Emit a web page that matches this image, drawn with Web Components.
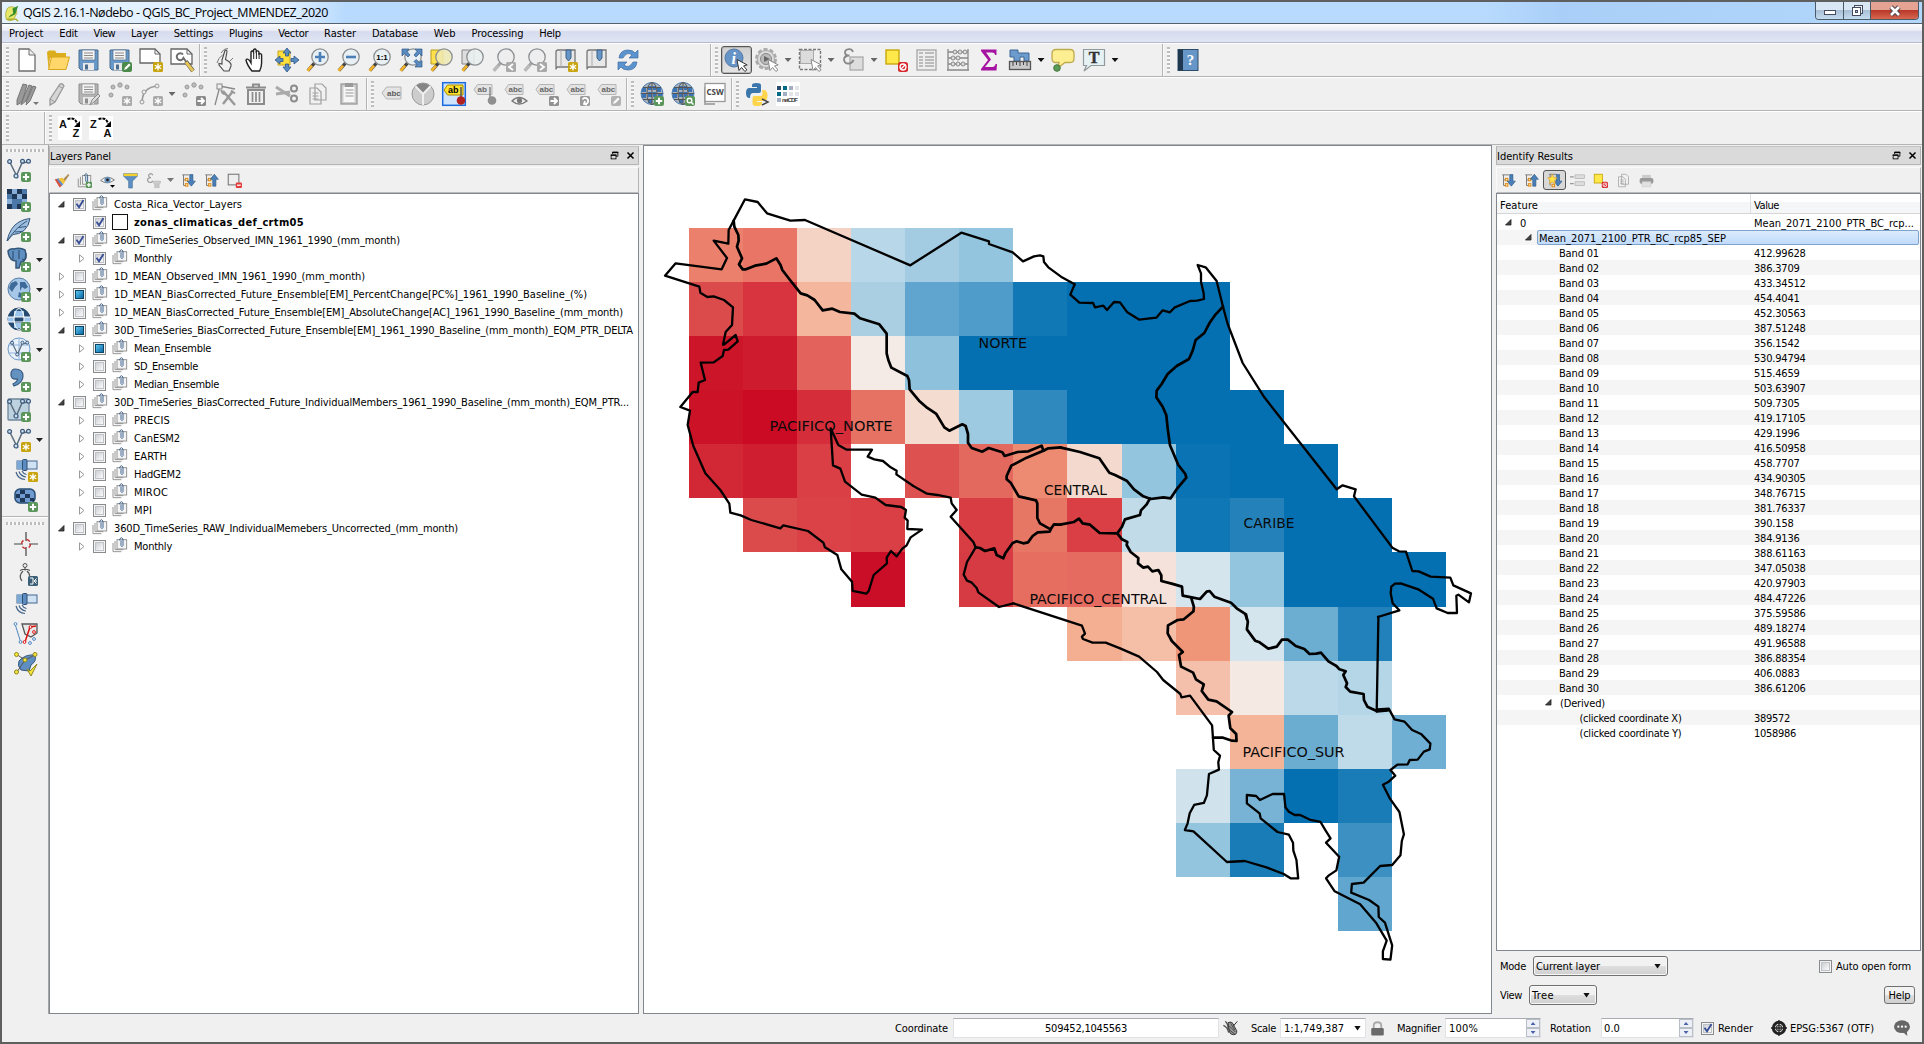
<!DOCTYPE html>
<html lang="en">
<head>
<meta charset="utf-8">
<title>QGIS 2.16.1-Nødebo - QGIS_BC_Project_MMENDEZ_2020</title>
<style>
html,body{margin:0;height:100%;overflow:hidden}
body{font:11px/14px "DejaVu Sans Condensed","DejaVu Sans",sans-serif;color:#000;background:#5f5f5f}
</style>
</head>
<body>
<qgis-window></qgis-window>
<script>
const define=(name,css,html,init)=>customElements.define(name,class extends HTMLElement{
  connectedCallback(){
    if(this.shadowRoot)return;
    const root=this.attachShadow({mode:'open'});
    const a=(k,d='')=>this.hasAttribute(k)?this.getAttribute(k):d;
    root.innerHTML=`<style>*{box-sizing:border-box}:host{box-sizing:border-box}${css}</style>`+(typeof html==='function'?html(a,this):html);
    if(init)init(root,a,this);
  }
});

/* ---------- icon drawings on a 24 x 24 grid ---------- */
const plus='<rect x="14" y="14" width="10" height="10" rx="2" fill="#5a965a"/><path d="M19 15.8v6.4M15.8 19h6.4" stroke="#fff" stroke-width="2"/>';
const star='<rect x="14" y="14" width="10" height="10" rx="1.5" fill="#c8a40e"/><path d="M19 15.5v7M15.8 17.2l6.4 3.6M22.2 17.2l-6.4 3.6" stroke="#fff" stroke-width="1.3"/><circle cx="19" cy="19" r="1.6" fill="#fff"/>';
const gstar=star.replace('#c8a40e','#a9a9a9');
const pen=c=>`<rect x="14" y="14" width="10" height="10" rx="2" fill="${c}"/><path d="M16 22l1-2.5 4-4 1.6 1.5-4 4z" fill="#fff"/>`;
const arr=(d,c='#8a8a8a')=>`<rect x="14" y="14" width="10" height="10" rx="1.5" fill="${c}"/><path d="${d}" stroke="#fff" stroke-width="1.8" fill="none"/>`;
const right='M15.5 19h6M19 16l3 3-3 3';
const floppy=(a,b)=>`<path d="M2 2h19v20H4l-2-2z" fill="${a}" stroke="${b}"/><rect x="5" y="2" width="13" height="10" fill="#f4f4f4" stroke="${b}" stroke-width=".7"/><path d="M7 5h9M7 7.5h9M7 10h9" stroke="#8b8b8b"/><rect x="6" y="15" width="11" height="7" fill="#e8e8e8"/><rect x="8" y="16.5" width="3" height="5" fill="${b}"/>`;
const glass=(fill='#e9f0f4',h='#f1b32c',inner='')=>`<path d="M8.5 15L2 22.5" stroke="#444" stroke-width="3.4"/><path d="M6 17.7L1.6 22.8" stroke="${h}" stroke-width="2.8"/><circle cx="14" cy="9" r="8.2" fill="${fill}" stroke="#8b8f91" stroke-width="1.3"/>${inner}`;
const cursor='<path d="M13 11.5l2 11 2.6-3 3.3 4 2-1.6-3.3-4 3.6-1z" fill="#fff" stroke="#333" stroke-width="1"/>';
const gcursor=cursor.replace('#333','#888');
const vee='<path d="M3 4.5l6.5 13L15 5l6-1" fill="none" stroke="#5c6d7e" stroke-width="1.5"/><g fill="#cfdfee" stroke="#39597b" stroke-width="1.2"><circle cx="2.6" cy="3.5" r="1.9"/><circle cx="15.5" cy="3.3" r="1.9"/><circle cx="21.5" cy="3.3" r="1.9"/><circle cx="9" cy="18" r="2"/></g>';
const netglobe=badge=>`<circle cx="12" cy="11.5" r="11" fill="#a9b3bd" stroke="#4b7db4"/><g fill="#3b73b4"><path d="M8 4h4v4H8zM8 10h4v5H8zM2 6h4v4H2zM17 6h4v4h-4zM13 4h3v4h-3zM13 10h3v5h-3zM2 12h4v4H2zM18 12h4v3h-4zM8 17h4v4H8z"/></g><g stroke="#555" fill="none"><ellipse cx="12" cy="11.5" rx="5" ry="11"/><path d="M1 11.5h22M12 .5v22M3 5.500h18M3 17.500h18"/></g>${badge}`;
const tag=(f,b,t='abc',c='#5d5d5d')=>`<path d="M2 11l4.500-6H21v12H6.500z" fill="${f}" stroke="${b}"/><text x="7" y="14" font-size="8" font-weight="bold" font-family="Liberation Sans" fill="${c}">${t}</text>`;
const stag=(t='abc')=>`<path d="M1 7.500L4.500 2.500H19v10H4.500z" fill="#e3e3e3" stroke="#b4b4b4"/><text x="4.500" y="10.300" font-size="8" font-weight="bold" font-family="Liberation Sans" fill="#666">${t}</text>`;
const dots='<g fill="#bdbdbd" stroke="#999"><circle cx="3" cy="13" r="2"/><circle cx="5" cy="5" r="2"/><circle cx="12" cy="3" r="2.200"/><circle cx="19" cy="5" r="2"/></g>';
const sat='<rect x="3" y="3" width="20" height="8" fill="#cfe1f3" stroke="#45698f"/><rect x="3" y="3" width="6" height="8" fill="#7ca8d6"/><rect x="8.500" y="1.500" width="4.500" height="11" rx="1" fill="#5c8cc0" stroke="#2f4f73"/><path d="M2 14q2 7 9 7.500M5 13.500q1.500 4.500 7 5.500M8 13q1.500 3 4.500 3.500" fill="none" stroke="#43648a" stroke-width="1.200"/>';
const tree='<path d="M2 3h11M4 3v17h7M4 11h6" stroke="#777" fill="none" stroke-width="1.500"/><g fill="#ffe9a8" stroke="#e08a1a" stroke-width="1.600"><rect x="7" y="8.500" width="4" height="4"/><rect x="7" y="17" width="4" height="4"/></g>';
const down='<path d="M14 2.500h5V13h4l-6.500 8L10 13h4z" fill="#4a81bb" stroke="#29527d"/>';
const up='<path d="M14 21h5V10h4L16.500 2 10 10h4z" fill="#4a81bb" stroke="#29527d"/>';
const ban='<rect x="14" y="14" width="10" height="10" rx="2.500" fill="#d8272c"/><circle cx="19" cy="19" r="3" fill="none" stroke="#fff" stroke-width="1.300"/><path d="M17 21l4-4" stroke="#fff" stroke-width="1.300"/>';
const book=`<path d="M2 21V4q0-2 2-2h17v17H4q-2 0-2 2.500" fill="#e8e8e8" stroke="#777" stroke-width="1.300"/><path d="M7 2v17" stroke="#aaa"/><path d="M12 2h5v8l-2.500 3L12 10z" fill="#6695c6" stroke="#3b6188"/>`;
const letters=(p,q)=>`<path d="M0 0h24v24H0z" fill="#fff"/><g font-size="11" font-family="Liberation Sans" fill="#111"><text x="1" y="12">${p}</text><text x="14.500" y="21">${q}</text></g><path d="M9.500 3q8-2.500 9.500 5" fill="none" stroke="#000" stroke-width="2" stroke-dasharray="3 1"/><path d="M22 5v6h-6z"/>`;
const ICON={
 app:'<path d="M4 6Q7 1 14 3q5 3 4 9l-5 9q-6 3-10-1Q1 12 4 6z" fill="#e8e76a" stroke="#a2a62d"/><path d="M6 18q3-5 7-6l-1-7 8-4-4 12z" fill="#368c2d"/><path d="M4 20h13l3 3" stroke="#b2b02d" fill="none" stroke-width="2"/>',
 newdoc:'<path d="M4 1h10l6 6v16H4z" fill="#fff" stroke="#6d6d6d" stroke-width="1.300"/><path d="M14 1v6h6" fill="#eee" stroke="#6d6d6d"/>',
 open:'<path d="M1 4l2-1.500h6L10.500 5H20v5H4L2.500 21z" fill="#dcae1e"/><path d="M5.500 9H23.500L20 21.500H2.500z" fill="#ffd76a" stroke="#d9a51a"/>',
 save:floppy('#6898c8','#4a6c8f'), saveas:floppy('#6898c8','#4a6c8f')+pen('#4c8a4c'),
 comp:'<path d="M1 1h15l5 5v9H1z" fill="#fff" stroke="#666" stroke-width="1.300"/><path d="M16 1v5h5" fill="none" stroke="#666"/>'+star,
 compmgr:'<path d="M1 1h16l5 5v10H1z" fill="#fff" stroke="#666" stroke-width="1.300"/><path d="M17 1v5h5" fill="none" stroke="#666"/><path d="M13 6.500a3.500 3.500 0 10.5 3.500l9 12.500" stroke="#6d6d6d" stroke-width="2" fill="none"/><path d="M16 13.500l7 9.500" stroke="#444" stroke-width="4"/><path d="M16 14l7 9" stroke="#e4c55a" stroke-width="3"/>',
 touch:'<path d="M9 12L12 2.500q2-1 2 1l-1.500 8 4 2.500q2 2 1.500 4L16 23h-5l-5-6v-1.500l3 .5z" fill="#f1f1f1" stroke="#4a4a4a" stroke-width="1.100"/><path d="M8 5q3-5 7-4.500M9.500 7Q5 10 4 15M17 13l3-3" stroke="#777" fill="none"/>',
 hand:'<path d="M8 23Q3 17 2 12q1-2 3.500.500L7 15V4q1-2 2.500 0V2q1.500-2 2.700 0v1.500q1.600-1.500 2.800.5v2q1.600-1 2.600.8V15q0 4-2 8z" fill="#fff" stroke="#222" stroke-width="1.400"/><path d="M9.700 5v6M12.400 4v7M15.100 5v6" stroke="#222"/>',
 pan:'<path d="M3 3h12v14H3z" fill="#ffdf3c" stroke="#c5a318"/><g fill="#5a8cc2" stroke="#2e5685" stroke-width=".8"><path d="M12 0l4 5h-2.500v3h-3V5H8zM12 24l4-5h-2.500v-3h-3v3H8zM0 12l5-4v2.500h3v3H5V16zM24 12l-5-4v2.500h-3v3h3V16z"/></g>',
 zin:glass(undefined,undefined,'<path d="M14 4v10M9 9h10" stroke="#4a7fb8" stroke-width="2.600"/>'),
 zout:glass(undefined,undefined,'<path d="M9 9h10" stroke="#4a7fb8" stroke-width="2.600"/>'),
 z11:glass(undefined,undefined,'<text x="14" y="12" font-size="8" font-weight="bold" text-anchor="middle" font-family="Liberation Sans">1:1</text>'),
 zfull:glass()+'<g fill="#5a8cc2" stroke="#2e5685" stroke-width=".7"><path d="M3 1h7L8 3.500 11 7 9 9 5.500 5.500 3 8zM23 1h-7l2 2.500L15 7l2 2 3.500-3.500L23 8zM23 19h-7l2-2.500-3-3 2-2 3.500 3 2.500-2z"/></g>',
 zsel:'<path d="M1 2h12v14H1z" fill="#ffe14d" stroke="#b79c1f"/>'+glass('#efe9b4dd'), zlay:'<path d="M1 2h12v14H1z" fill="#ddd" stroke="#888"/>'+glass('#e9efefdd'),
 zlast:glass('#eee','#bbb').replace('#444','#aaa')+arr('M21 16l-4 3 4 3','#a9a9a9'), znext:glass('#eee','#bbb').replace('#444','#aaa')+arr('M17 16l4 3-4 3','#a9a9a9'),
 bmnew:book+star,bm:book,
 refresh:'<path d="M3 10Q4 2 12 2q5 0 7 3l3-3v8h-9l3-3q-5-4-9 3z" fill="#5b93cf" stroke="#3c6da3" stroke-width=".7"/><path d="M21 14q-1 8-9 8-5 0-7-3l-3 3v-8h9l-3 3q5 4 9-3z" fill="#5b93cf" stroke="#3c6da3" stroke-width=".7"/>',
 info:'<circle cx="10" cy="10" r="9" fill="#6694c6" stroke="#517aa6"/><text x="7.500" y="16" font-size="16" font-weight="bold" font-style="italic" font-family="Liberation Serif" fill="#fff">i</text>'+cursor,
 gear:'<g fill="#dcdcdc" stroke="#aaa"><circle cx="11" cy="11" r="9.500" stroke-dasharray="4 2" stroke-width="3"/><circle cx="11" cy="11" r="8.500"/></g><circle cx="11" cy="11" r="5.500" fill="#bbb" stroke="#888"/><path d="M9 8l6 3-6 3z" fill="#666"/>'+gcursor,
 select:'<rect x="1.500" y="1.500" width="21" height="20" fill="none" stroke="#777" stroke-width="1.400" stroke-dasharray="3 1.500"/><rect x="2.500" y="2.500" width="13" height="13" fill="#dcdcdc" stroke="#aaa"/>'+gcursor,
 expr:'<rect x="9" y="9" width="13" height="13" fill="#ddd" stroke="#aaa" stroke-width="1.300"/><path d="M12 4Q11 1 8 1.200 4 1.500 4 4.500 4 7.500 8.500 7.500 3 7.500 3 12q1 4 5 3.500 3-.3 4.500-3.500" fill="none" stroke="#888" stroke-width="1.800"/>',
 desel:'<rect x="2" y="2" width="13" height="14" fill="#ffe94a" stroke="#c3a200" stroke-width="1.300"/>'+ban,
 table:'<rect x="2" y="2" width="19" height="20" fill="#eee" stroke="#aaa" stroke-width="1.400"/><path d="M4 5h4M10 5h9M4 9h4M10 9h9M4 12h4M10 12h9M4 15h4M10 15h9M4 18h4M10 18h9" stroke="#aaa" stroke-width="1.500"/>',
 abacus:'<path d="M2 22V1M22 22V1M1 22h22M2 4h20M2 10h20M2 16h20" stroke="#888" stroke-width="1.300"/><g fill="#ddd" stroke="#888"><circle cx="9" cy="4" r="2"/><circle cx="14" cy="4" r="2"/><circle cx="19" cy="4" r="2"/><circle cx="7" cy="10" r="2"/><circle cx="12" cy="10" r="2"/><circle cx="7" cy="16" r="2"/><circle cx="12" cy="16" r="2"/><circle cx="17" cy="16" r="2"/></g>',
 sigma:'<path d="M4 1.500h15.500V7H18q0-2.500-3-2.500H9l5 7-6 7.500h7.500q2.500 0 3-3H20l-.5 6.500H4V21l7-9-7-9z" fill="#a514a0"/>',
 ruler:'<path d="M2 2h8v3h11v8h-5V9h-4v4H6V9H2z" fill="#6c9bcd" stroke="#3d6792"/><rect x="1.500" y="13.500" width="21" height="8" fill="#c9c9c9" stroke="#555" stroke-width="1.300"/><path d="M5 14v4M8.500 14v3M12 14v4M15.500 14v3M19 14v4" stroke="#444"/>',
 tip:'<path d="M5 1.500h14q4 0 4 4v5q0 4-4 4h-5L7 20l1-5.500H5q-4 0-4-4v-5q0-4 4-4z" fill="#fdef91" stroke="#c0aa4e" stroke-width="1.300"/><circle cx="6" cy="20" r="3.300" fill="#5d9a57" stroke="#447840"/>',
 text:'<path d="M1.500 1.500h21v16H9L2 23l2.500-5.500h-3z" fill="#e6f1f4" stroke="#909a9d" stroke-width="1.200"/><text x="12" y="15" font-size="16" text-anchor="middle" font-family="Liberation Serif" fill="#333" stroke="#333" stroke-width=".4">T</text>',
 help:'<rect x="2" y="1.500" width="20" height="21" fill="#6695c8" stroke="#2c4b69"/><rect x="2" y="1.500" width="5" height="21" fill="#1f3850"/><text x="14.500" y="17" font-size="15" text-anchor="middle" font-family="Liberation Serif" fill="#fff">?</text>',
 pencils:'<g fill="#999" stroke="#777"><path d="M2 18L8 2l4 1-5 17-5 3zM7 19l7-16 3 1-6 15-5 4zM12 18l6-14 3 1-6 14-4 4z"/></g><path d="M18 20h6l-3 3z" fill="#777"/>',
 pencil:'<path d="M4 17L14 2q3-1 4 2L9 20l-5 3z" fill="#d6d6d6" stroke="#999" stroke-width="1.300"/><path d="M4 17l5 3M13 4l4 2.500" stroke="#999"/>',
 gsave:floppy('#b4b4b4','#8d8d8d')+'<path d="M13 23l2-5 6-6 2 2-6 6z" fill="#ddd" stroke="#888"/>',
 pts:dots+gstar,curve:'<path d="M3 21Q3 5 19 4" stroke="#999" fill="none" stroke-width="1.600"/><g fill="#eee" stroke="#999"><circle cx="3" cy="20" r="2"/><circle cx="5" cy="10" r="2"/><circle cx="18" cy="4" r="2"/></g>'+gstar,
 move:dots+arr(right),node:'<path d="M2 23L7 4l15 3M7 5h3" fill="none" stroke="#888" stroke-width="1.300"/><rect x="4" y="2" width="5" height="5" fill="#eee" stroke="#888"/><path d="M10 22L20 9M10 9l12 14" stroke="#999" stroke-width="2.400" fill="none"/><path d="M8.500 8q0 4 4 4M18 8.500l4 3" fill="none" stroke="#999" stroke-width="2"/>',
 trash:'<path d="M4 8h16v14H4zM2 5.500h20M9 5V2.500h6V5" fill="none" stroke="#8c8c8c" stroke-width="2"/><path d="M8.500 10v10M12 10v10M15.500 10v10" stroke="#8c8c8c" stroke-width="1.700"/>',
 cut:'<path d="M1 5l14 9M1 12l14-2" stroke="#aaa" stroke-width="3"/><g fill="none" stroke="#8c8c8c" stroke-width="2"><circle cx="19" cy="6.500" r="3"/><circle cx="19" cy="16.500" r="3"/></g>',
 copy:'<g fill="#f1f1f1" stroke="#a0a0a0" stroke-width="1.200"><path d="M9 2h7l4 4v12H9zM4 6h7l4 4v12H4z"/></g><path d="M6.500 11h6M6.500 14h6M6.500 17h6" stroke="#a0a0a0"/>',
 paste:'<rect x="4" y="2" width="16" height="20" fill="#ccc" stroke="#999" stroke-width="1.300"/><rect x="6.500" y="5" width="11" height="15" fill="#f7f7f7"/><path d="M8.500 8h8M8.500 11h8M8.500 14h8" stroke="#999"/><rect x="8" y="1" width="8" height="4" fill="#999"/>',
 abc:tag('#e3e3e3','#b4b4b4'),pie:'<circle cx="12" cy="12" r="11" fill="#ccc" stroke="#999"/><path d="M12 13L4.500 4.300Q12-2 19.500 4.300z" fill="#858585"/><path d="M12 23V12L4.500 4.300M12 12l7.500-7.700" stroke="#f0f0f0" stroke-width="2" fill="none"/>',
 abhl:'<rect x=".7" y=".7" width="22.600" height="22.600" fill="#cfe3fb" stroke="#1a6be0" stroke-width="1.500"/><path d="M2 8l3.500-5H21v10H5.500z" fill="#ffe32e" stroke="#a68c00"/><text x="6" y="11" font-size="9" font-weight="bold" font-family="Liberation Sans">ab</text><path d="M19 5v11" stroke="#555" stroke-width="1.500"/><circle cx="19" cy="18.500" r="4.300" fill="#b1211f"/>',
 abpin:stag('ab')+'<path d="M17 5v11" stroke="#888" stroke-width="1.500"/><circle cx="19" cy="18.500" r="4.300" fill="#8f8f8f"/>',
 abeye:stag()+'<path d="M8 19q7-7 15 0-8 6-15 0z" fill="#eee" stroke="#777" stroke-width="1.300"/><circle cx="15.500" cy="18.500" r="2.600" fill="#777"/>',
 abmove:stag()+arr(right,'#929292'),abrot:stag()+arr('M16.500 17.500a3 3 0 112.500 4.500M19 19l-1 3 3 1','#9a9a9a'),abedit:stag()+pen('#b2b2b2'),
 gl1:netglobe(plus),gl2:netglobe('<rect x="14" y="14" width="10" height="10" rx="2" fill="#5a965a"/><circle cx="18.500" cy="18.500" r="2.300" fill="none" stroke="#fff" stroke-width="1.400"/><path d="M20 20l2.500 2.500" stroke="#fff" stroke-width="1.500"/>'),
 csw:'<path d="M3 5v17h10" fill="none" stroke="#aaa" stroke-width="2"/><rect x="3" y="1.500" width="20" height="18" fill="#fff" stroke="#999" stroke-width="1.300"/><text x="13" y="13" font-size="8" font-weight="bold" text-anchor="middle" font-family="Open Sans" fill="#444">CSW</text>',
 python:'<path d="M7 6V3q0-2 4.500-2T16 3v6q0 2-2 2H8q-3 0-3 5-4 .5-4-5t4-5h7V5H7z" fill="#3a76ab"/><path d="M17 8h2q3.500.500 3.500 5.500T19 19h-7v1h5v2q-1 2-5 2t-4.500-2v-6q0-2 2-2h6q2 0 2-3z" fill="#fed44b"/><path d="M17 17l6 3-6 3" fill="none" stroke="#444" stroke-width="1.500"/>',
 netcdf:'<path d="M0 0h24v24H0z" fill="#fff"/><path d="M1 4h4v4H1z" fill="#2c4b6b"/><path d="M7 4h4v4H7zM1 10h4v4H1z" fill="#006a87"/><path d="M13 4h4v4h-4zM7 10h4v4H7zM1 16h4v4H1z" fill="#a1aec3"/><path d="M19 4h4v4h-4zM13 10h4v4h-4zM19 10h4v4h-4z" fill="#e2e4e8"/><text x="6" y="19.500" font-size="6" font-family="Liberation Sans" textLength="16" fill="#444">netCDF</text>',
 az:letters('A','Z'),za:letters('Z','A'),
 vadd:vee+plus,vnew:vee+star,
 raster:'<path d="M0 1h20v20H0z" fill="#4b78a9"/><path d="M0 1h5v5H0zM10 1h5v5h-5zM5 6h5v5H5zM15 6h5v5h-5zM0 16h5v5H0zM10 16h5v5h-5z" fill="#1e3754"/><path d="M5 1h5v5H5zM10 6h5v5h-5zM0 11h5v5H0zM15 11h5v5h-5z" fill="#88aed6"/>'+plus,
 feather:'<path d="M0 23Q3 9 12 4q5-3 11-3.500-1 7.500-6 12-5 4-11 4l-3 3z" fill="#9ebfdf" stroke="#34567c"/><path d="M.5 23Q8 10 20 3M8 14l7-.5M12 9.500l7-1" stroke="#34567c" fill="none"/>'+plus,
 elephant:'<path d="M1 3q2-3 6-2 6-2 11 1 2 7-1 11l-3 1-2 6H9V13Q2 13 1 3z" fill="#6090c2" stroke="#335679" stroke-width="1.500"/><path d="M6 3v8M12 2v9M15 11q5 3 4-6" fill="none" stroke="#335679" stroke-width="1.300"/>'+plus,
 earth:'<circle cx="12" cy="11" r="11" fill="#a6c7e7" stroke="#5a7fa6"/><path d="M4 5l5-2 2 3-3 3-3 5-3-4zM13 4h5l3 5-3 2-3-2-2 4zM12 14l4 2-1 4-4-1z" fill="#3d6a99"/>'+plus,
 wms:'<circle cx="12" cy="11" r="11" fill="#254a70" stroke="#254a70"/><path d="M7 3h10v6H7zM1 9h6v5H1zM17 9h6v5h-6zM7 15h10v5H7z" fill="#9dc4ea"/><g stroke="#fff" fill="none"><ellipse cx="12" cy="11" rx="5" ry="10.500"/><path d="M1 9h22M1 14h22"/></g>'+plus,
 wfs:'<circle cx="12" cy="11" r="11" fill="#e8f1fa" stroke="#6f9ac8"/><path d="M2 7h20M2 15h20M12 0v22" stroke="#8eb2da"/><g transform="translate(3 2) scale(.8)">'+vee+'</g>'+plus,
 comma:'<path d="M8 1q8 0 8 7 0 7-9 10l-1-2q5-3 4.500-5Q3 12 4 5q1-4 4-4z" fill="#6391c0" stroke="#385b83" stroke-width="1.200"/>'+plus,
 vbox:'<rect x="1" y="1" width="21" height="21" rx="1" fill="#bdd2e1" stroke="#6f8699" stroke-width="1.300"/>'+vee+plus,
 gpsnew:sat+star,gps:sat,
 db:'<rect x="1" y="1" width="20" height="14" rx="5" fill="#6f9bd0" stroke="#274c74" stroke-width="1.500"/><path d="M6 2h5v4H6zM11 6h5v4h-5zM2 6h4v4H2zM6 10h5v4H6zM16 10h4v3h-4z" fill="#1f3857"/>'+plus,
 cross:'<path d="M0 12h9M15 12h9M12 0v9M12 15v9" stroke="#444" stroke-width="1.200"/><circle cx="12" cy="12" r="4.500" fill="none" stroke="#c53030" stroke-width="1.500" stroke-dasharray="4 3"/>',
 compass:'<circle cx="11" cy="3.500" r="2" fill="#eee" stroke="#555"/><path d="M11 5.500v3M9 9q-5 5-1 10M13 9q3 3 2.500 5M6 8.500q5-2.500 10 0" fill="none" stroke="#555" stroke-width="1.200"/><rect x="14" y="14" width="10" height="10" rx="1.500" fill="#3a5f77"/><path d="M16 16h3v6h-3M22.500 16.500l-2.500 2.500 2.500 2.500M20 19h3" fill="none" stroke="#fff"/>',
 topo:'<path d="M1 2l6 19" stroke="#4d86c5"/><path d="M8 2h15v9l-6 4-6-3z" fill="#e8e8e8" stroke="#555" stroke-width="1.300"/><path d="M11 20l5-15 6-1" stroke="#d11" fill="none" stroke-width="1.500"/><g fill="#fff" stroke="#4d86c5"><circle cx="1.500" cy="2" r="1.400"/><circle cx="6.500" cy="20" r="1.400"/><circle cx="16" cy="21" r="1.400"/><circle cx="20" cy="17" r="1.400"/></g><g fill="#fff" stroke="#d11"><circle cx="10.500" cy="20" r="1.400"/><circle cx="16.500" cy="5" r="1.400"/><circle cx="20" cy="10" r="1.400"/></g>',
 polycheck:'<path d="M5 9q6-7 16-6 2 6-4 10l-2 6-8-1q-4-4-2-9z" fill="#5f8ec2" stroke="#34577c"/><path d="M2 2l9 6 10-5M11 8L3 20" stroke="#555" fill="none"/><g fill="#f5e63b" stroke="#8f8620"><circle cx="2.500" cy="2.500" r="2"/><circle cx="21" cy="2.500" r="2"/><circle cx="11" cy="8" r="2"/><circle cx="2.500" cy="20" r="2"/><path d="M13 17l3 2 7-7-6 12z"/></g>',
 brush:'<path d="M15 10l8-8 .8 1.500L17 13z" fill="#a98a52" stroke="#a98a52"/><path d="M1 10l5-1 7 11-4 3z" fill="#d9503b"/><path d="M4 9.500l3.500-1L15 18l-3 2.500z" fill="#5e8ecb"/><path d="M7 9l6-2 5 6-3 5z" fill="#f4c33a"/>',
 grpadd:'<g fill="#f3f3f3" stroke="#888" stroke-width="1.400"><path d="M2 9v13h12M5.500 6v13" fill="none"/><rect x="9" y="4" width="13" height="14"/></g><path d="M12 5V3q2.500-4 5 0v10q-1.500 3-3 0V5" fill="none" stroke="#3d6690" stroke-width="1.600"/>'+plus,
 group:'<path d="M1.500 9v13H14M4.500 6v13H17" fill="none" stroke="#8d8d8d" stroke-width="1.400"/><rect x="7.500" y="4" width="14.500" height="14" fill="#f5f5f5" stroke="#8d8d8d" stroke-width="1.400"/><path d="M11.500 5V3q2.500-4 5 0v10q-1.500 3-3 0V5" fill="none" stroke="#3f6491" stroke-width="1.500"/>',
 eye:'<path d="M1 12Q11 2 23 11q-11 9-22 1z" fill="#eef3f7" stroke="#777" stroke-width="1.500"/><circle cx="12" cy="11" r="5" fill="#6c94bd"/><circle cx="12" cy="11" r="2.200" fill="#222"/><path d="M16 19h8l-4 4.500z"/>',
 funnel:'<path d="M1 1h22v4l-8 8v11H9V13L1 5z" fill="#5d8fc4" stroke="#46709c"/><path d="M1 1h22v4H1z" fill="#f2d12e"/>',
 expfil:'<path d="M11 3.500Q9 0 6 1.500 3 3.500 5 6 6 7.500 8 7.500 2 8 2.500 12q1.500 4 5.500 3 2-.5 3-2.500" fill="none" stroke="#999" stroke-width="1.900"/><path d="M12 13h11v3l-2 2v5.500h-2.500V18h-2v5.500H14V18l-2-2z" fill="#ccc" stroke="#b0b0b0"/>',
 expand:tree+down,collapse:tree+up,
 remove:'<rect x="2" y="2" width="17" height="17" fill="#eee" stroke="#777" stroke-width="1.700"/><rect x="14" y="15" width="10" height="9" rx="2" fill="#e23c3c"/><path d="M16 19.500h6" stroke="#fff" stroke-width="2"/>',
 expnew:'<path d="M3 2h12M5 3v17" stroke="#777" stroke-width="1.500"/><rect x="8" y="18" width="4" height="4" fill="#ffe9a8" stroke="#e08a1a" stroke-width="1.600"/><g transform="translate(1 0)">'+down+'</g><path d="M8.500 2l2.300 5 5.200.7-3.800 3.800 1 5.500-4.700-2.700L3.800 17l1-5.500L1 7.700 6.200 7z" fill="#ffe14a" stroke="#d99a22"/>',
 form:'<path d="M0 6h6M0 17h6" stroke="#999" stroke-width="2"/><g fill="#ddd" stroke="#aaa"><rect x="8" y="3" width="15" height="6"/><rect x="8" y="14" width="15" height="6"/></g>',
 print:'<path d="M5 3h14v6H5z" fill="#ccc"/><rect x="1" y="8" width="22" height="9" rx="3" fill="#999"/><path d="M5 14h14v8H5z" fill="#e1e1e1" stroke="#ccc"/>',
 mouse:'<path d="M5 2q5 5 4 13M2 8q6 2 8 11" stroke="#555" fill="none" stroke-width="2"/><path d="M9 4q7-3 9 5l4 7q1 6-5 6-5 0-6-5z" fill="#999" stroke="#333" stroke-width="1.500"/><path d="M11 9l9 9M10 14l9 7M13 5l6 10" stroke="#222"/><path d="M17 9l6-7" stroke="#333" stroke-width="1.500"/>',
 lock:'<path d="M6 13V7q0-5 6-5t6 5v6" fill="none" stroke="#aaa" stroke-width="3"/><rect x="2" y="11" width="20" height="12" rx="2" fill="#6a6a6a"/>',
 crs:'<circle cx="12" cy="12" r="8.500" fill="#e0e0e0" stroke="#222" stroke-width="4.500"/><path d="M0 12h24M12 0v24" stroke="#222" stroke-width="2"/><circle cx="12" cy="12" r="4" fill="none" stroke="#333" stroke-width="1.600"/>',
 bubble:'<ellipse cx="12" cy="10" rx="12" ry="9.500" fill="#666"/><path d="M12 17l8 7-1-9z" fill="#666"/><g fill="#fff"><circle cx="6.500" cy="10" r="1.700"/><circle cx="12" cy="10" r="1.700"/><circle cx="17.500" cy="10" r="1.700"/></g>',
 float:'<path d="M7 8V3h14v11h-5" fill="none" stroke="#000" stroke-width="2.200"/><path d="M6 4h16" stroke="#000" stroke-width="3.500"/><rect x="3" y="11" width="13" height="10" fill="none" stroke="#000" stroke-width="2.200"/><path d="M2 11h15" stroke="#000" stroke-width="3.500"/>',
 close:'<path d="M4 4l16 16M20 4L4 20" stroke="#000" stroke-width="4"/>'
};
define('q-icon',':host{display:block;width:24px;height:24px;flex:none}svg{display:block;width:100%;height:100%;overflow:visible}text{line-height:1}',
 a=>`<svg viewBox="0 0 24 24">${ICON[a('name')]}</svg>`,
 (r,a,el)=>{const s=a('size');if(s){el.style.width=s+'px';el.style.height=s+'px'}});

/* text set to a given advance width by tracking */
define('fit-text',':host{display:block;white-space:pre;flex:none}span{display:inline-block;padding-top:2px}','<span><slot></slot></span>',
 (r,a,el)=>{const w=+a('w');if(!w)return;
  const s=r.querySelector('span'),n=[...el.textContent].length,nat=s.getBoundingClientRect().width;
  s.style.letterSpacing=(w-nat)/n+'px';el.style.width=w+'px'});

define('check-box',`:host{display:block;flex:none;width:13px;height:13px;border:1px solid #8a8b8c;background:#f4f4f4;padding:1px}
 i{display:block;width:9px;height:9px;border:1px solid #bfc3c8;background:linear-gradient(135deg,#cdd0d6,#fbfbfb)}
 i.part{border-color:#0b4566;background:linear-gradient(135deg,#5cc4ee,#0a6aa6)}svg{display:block;margin:-2px 0 0 -1px}`,
 a=>a('state')=='part'?'<i class="part"></i>':a('state')=='on'?'<i><svg width="10" height="10" viewBox="0 0 10 10"><path d="M1.500 4.800L4 8.200 8.500 1" fill="none" stroke="#3b4f96" stroke-width="1.900"/></svg></i>':'<i></i>');

define('tree-arrow',':host{display:block;flex:none;width:9px;height:9px}svg{display:block}',
 a=>a('open')==='1'?'<svg width="9" height="9"><path d="M7 1.500v5.500H1.500z" fill="#444" stroke="#222" stroke-width=".8"/></svg>':'<svg width="9" height="9"><path d="M2.500.8l4.500 3.700-4.500 3.700z" fill="#fff" stroke="#9a9a9a"/></svg>');

define('tool-button',`:host{display:flex;flex:none;align-items:center;height:30px}b{display:flex;width:31px;height:28px;align-items:center;justify-content:center}
 b.on{border:1px solid #555;border-radius:3px;background:linear-gradient(#cfcfcf,#e4e4e4);box-shadow:inset 0 0 0 1px #b5b5b5}
 u{display:block;width:7px;height:4px;margin:0 3px 0 2px;background:#666;clip-path:polygon(0 0,100% 0,50% 100%)}u.k{background:#111}`,
 a=>`<b class="${a('on')?'on':''}"><q-icon name="${a('icon')}"></q-icon></b>${a('drop')?`<u class="${a('drop')}"></u>`:''}`);

define('tool-bar',`:host{display:flex;align-items:center;flex:none;border-right:1px solid #b4b4b4;border-left:1px solid #fafafa;padding-left:3px}
 s{display:block;width:3px;height:26px;margin-right:2.500px;background:repeating-linear-gradient(#bdbdbd 0 2px,#f8f8f8 2px 4px)}`,
 '<s></s><slot></slot>');

const btns=s=>s.trim().split(/\s+/).map(t=>{const [n,f]=t.split(':');return `<tool-button icon="${n}" ${f=='on'?'on="1"':f?`drop="${f}"`:''}></tool-button>`}).join('');

define('dock-title',`:host{display:flex;align-items:center;flex:none;height:19px;background:#dadada;border:1px solid #b4b4b4;border-top-color:#c4c4c4}
 q-icon+q-icon{margin:0 3px 0 7px}em{flex:1}`,
 '<slot></slot><em></em><q-icon name="float" size="9"></q-icon><q-icon name="close" size="9"></q-icon>');

const LAYERS=[
 [0,1,'on','Costa_Rica_Vector_Layers',128],[2,0,'on','zonas_climaticas_def_crtm05',170],
 [0,1,'on','360D_TimeSeries_Observed_IMN_1961_1990_(mm_month)',286],[1,0,'on','Monthly',38],
 [0,0,'','1D_MEAN_Observed_IMN_1961_1990_(mm_month)',251],
 [0,0,'part','1D_MEAN_BiasCorrected_Future_Ensemble[EM]_PercentChange[PC%]_1961_1990_Baseline_(%)',473],
 [0,0,'','1D_MEAN_BiasCorrected_Future_Ensemble[EM]_AbsoluteChange[AC]_1961_1990_Baseline_(mm_month)',509],
 [0,1,'part','30D_TimeSeries_BiasCorrected_Future_Ensemble[EM]_1961_1990_Baseline_(mm_month)_EQM_PTR_DELTA',519],
 [1,0,'part','Mean_Ensemble',77],[1,0,'','SD_Ensemble',64],[1,0,'','Median_Ensemble',85],
 [0,1,'','30D_TimeSeries_BiasCorrected_Future_IndividualMembers_1961_1990_Baseline_(mm_month)_EQM_PTR...',515],
 [1,0,'','PRECIS',36],[1,0,'','CanESM2',46],[1,0,'','EARTH',33],[1,0,'','HadGEM2',47],[1,0,'','MIROC',34],[1,0,'','MPI',18],
 [0,1,'','360D_TimeSeries_RAW_IndividualMemebers_Uncorrected_(mm_month)',344],[1,0,'','Monthly',38]];
define('layer-row',`:host{display:flex;align-items:center;height:18px}tree-arrow{margin-right:7px}
 check-box{margin-right:6px}q-icon{margin:-2px 6px 0 0}.sw{width:16px;height:16px;border:1px solid #111;background:#fff;margin-right:6px}`,
 (a,el)=>{const lv=+a('level');return `<span style="width:${lv?27:7}px;flex:none"></span>${lv==2?'<span style="width:16px;flex:none"></span>':`<tree-arrow open="${a('open')}"></tree-arrow>`}
 <check-box state="${a('state')}"></check-box>${lv==2?'<div class="sw"></div>':'<q-icon name="group" size="16"></q-icon>'}<slot></slot>`});

define('dock-tools',`:host{display:flex;align-items:center;flex:none;height:26px;margin-top:2px;border:1px solid #fafafa;border-right-color:#b4b4b4;border-bottom-color:#bbb}
 b{display:flex;align-items:center;justify-content:center;width:23px;height:20px}b.on{border:1px solid #555;border-radius:3px;background:#d8d8d8}
 u{display:block;width:7px;height:4px;margin:0 3px 0 2px;background:#777;clip-path:polygon(0 0,100% 0,50% 100%)}`,
 a=>a('icons').split(' ').map(t=>{const [n,f]=t.split(':');return `<b class="${f=='on'?'on':''}"><q-icon name="${n}" size="15"></q-icon></b>${f=='d'?'<u></u>':''}`}).join(''));

define('layers-panel',`:host{display:flex;flex-direction:column;width:590px;flex:none;padding-top:1px}
 .tree{flex:1;background:#fff;border:1px solid #82868f;padding-top:1px;min-height:0}`,
 `<dock-title><fit-text w="61">Layers Panel</fit-text></dock-title>
  <dock-tools icons="brush grpadd eye funnel expfil:d expand collapse remove"></dock-tools>
  <div class="tree">${LAYERS.map(([l,o,s,t,w])=>`<layer-row level="${l}" open="${o}" state="${s}"><fit-text w="${w}"${l==2?' style="font-weight:bold"':''}>${t}</fit-text></layer-row>`).join('')}</div>`);

/* ---------- map canvas ---------- */
const B='#0570b1',_=0;
const CELLS=[
 ['#eb816c','#e87566','#f4d3c5','#b8d7e8','#a3cbe2','#94c5de'],
 ['#dc4b4c','#d7343f','#f4b79e','#aacfe2','#5fa5cf','#4f9bc9','#1178b6',B,B,B],
 ['#cd1529','#cf1b2e','#e3625b','#f4ebe7','#8dc1dc',B,B,B,B,B],
 ['#cc1227','#cb0a23','#d52e3a','#e67264','#f5dcd0','#9ecae1','#2f88be',B,B,B,B],
 ['#d22836','#cf1e2f','#da3f46',_,'#dd5250','#e3695e','#ec8b71','#f4dace','#93c5de','#0a73b3',B,B],
 [_,'#dc4b4b','#da4248','#d93f45',_,'#d93d44','#e77765','#d93f45','#c1dce8','#0f77b5','#2481ba',B,B],
 [_,_,_,'#cb0e27',_,'#d63a42','#e56e61','#e56b60','#f5e3db','#d4e5ee','#94c5de',B,B,B],
 [_,_,_,_,_,_,_,'#f4ae92','#f4bea7','#ef9679','#d4e5ee','#6cadd2','#2281ba'],
 [_,_,_,_,_,_,_,_,_,'#f4c0ab','#f5e9e4','#bcd9ea','#b4d6e7'],
 [_,_,_,_,_,_,_,_,_,_,'#f4b498','#6bacd1','#bfdae8','#6fafd3'],
 [_,_,_,_,_,_,_,_,_,'#d0e3ed','#78b3d5',B,'#1a7cb7'],
 [_,_,_,_,_,_,_,_,_,'#94c5de','#197cb7',_,'#3c91c2'],
 [_,_,_,_,_,_,_,_,_,_,_,_,'#60a6cf']];
const GX=[689,743,797,851,905,959,1013,1067,1122,1176,1230,1284,1338,1392,1446],GY=[228,282,336,390,444,498,552,607,661,715,769,823,877,931];
const WEST=['1120,1270 1077,1281 1015,1237 1010,1224 994,1207 981,1202 971,1184 981,1146 1007,1102 1000,1086 932,1010 950,990 935,970 932,953 892,945 861,941 820,918 769,883 770,872 752,862 729,843 703,838 683,830 696,809 620,809 595,795 572,745 579,856 601,866 615,905 665,944 706,953 737,975 784,981 798,990 794,1013 803,1022 802,1047 846,1049 812,1072 800,1096 787,1106 770,1129 753,1113 740,1133 741,1150 701,1185 686,1233 679,1241 638,1233 636,1205 604,1168 592,1125 555,1102 550,1088 504,1053 430,1036 421,1045 334,1020 302,1006 271,998 268,971 241,930 196,880 160,798 143,735 150,692 121,681 158,636 173,636 176,608 195,600 182,548 221,547 248,528 252,510 265,509 293,484 287,465 252,494 249,494 257,456 276,435 279,382 252,360 221,349 202,351 181,338 178,320 75,287 107,250 245,268 261,234 221,182 265,191 266,150 281,122 315,58 353,66 381,100 451,122 495,120 811,256 964,158 1047,184 1047,192 1118,217 1149,244 1182,229 1200,226 1210,229 1212,246 1225,262 1263,290 1304,313'];
const WEST_IN=['281,122 283,140 295,165 296,182 291,200 306,235 297,253 308,268 318,268 345,257 379,251 409,235 422,256 427,270 450,300 482,340 502,346 524,360 548,391 577,386 600,396 643,401 660,415 718,433 740,461 740,520 745,540 754,563 802,588 807,600 809,628 837,662 862,684 889,702 913,742 928,752 967,733 977,738 984,762 984,788 995,804 1027,815 1046,804 1087,817 1094,828 1133,816 1165,814 1205,797 1210,812 1225,805 1262,802',
 '1210,812 1160,833 1114,857 1100,888 1100,898 1112,908 1136,949 1188,961 1192,970 1192,1014 1200,1030 1232,1048 1242,1033 1262,1034',
 '1007,1102 1020,1104 1035,1113 1063,1105 1070,1125 1090,1135 1096,1120 1118,1089 1130,1084 1150,1090 1164,1087 1178,1068 1193,1057 1229,1055 1232,1048'];
const EAST=['44,313 31,344 58,368 99,369 105,382 130,377 141,390 162,366 180,367 202,397 238,419 289,413 308,391 330,397 343,383 390,363 412,362 432,357 431,340 423,305 423,280 413,255 437,262 470,303 489,380 503,432 548,549 613,652 830,928 848,916 887,928 882,949 997,1103 1017,1114 1038,1115 1057,1173 1076,1174 1112,1190 1171,1193 1180,1216 1233,1240 1227,1267 1195,1244 1189,1247 1191,1299 1163,1299 1130,1285 1119,1256 1077,1229 1022,1210 1005,1211 994,1220 992,1240 998,1270 1018,1291 954,1311'];
const EAST_IN=['0,802 60,816 118,835 148,878 165,885 200,902 222,928 250,949 272,957 310,952 332,955 352,925 379,893 376,882 355,855 330,796 323,745 319,706 308,680 289,652 290,632 305,612 323,582 350,558 387,537 398,512 407,480 433,459 448,430 467,403 489,380',
 '0,1034 42,1026 57,1016 68,1030 90,1034 119,1059 172,1060 186,1040 195,1018 240,1005 243,991 260,973 270,955',
 '172,1060 186,1078 202,1086 200,1095 212,1116 235,1134 234,1150 250,1163 264,1160 277,1174 295,1170 304,1186 304,1203 335,1211 366,1220 368,1247 395,1252 420,1257 440,1235 449,1233 463,1250 513,1268 530,1285 558,1303 561,1318'];
const SOUTH=['1215,230 1210,515 1242,512 1245,506 1212,508 1245,506 1262,538 1291,545 1313,570 1340,583 1366,611 1364,628 1347,635 1329,659 1306,660 1300,673 1270,674 1250,690 1264,707 1245,725 1228,734 1248,775 1276,816 1289,883 1283,903 1279,946 1255,975 1220,978 1172,1028 1138,1032 1136,1058 1188,1080 1215,1100 1216,1131 1234,1148 1255,1216 1250,1259 1228,1257 1228,1234 1239,1202 1208,1148 1162,1093 1088,1054 1063,1015 1070,1007 1093,991 1101,950 1063,908 1076,895 1060,869 1047,846 1018,840 988,825 972,825 955,815 945,802 941,762 908,762 871,780 860,768 833,765 833,790 870,820 873,835 922,876 955,884 967,908 968,932 977,960 982,1015 960,1015 940,1002 890,982 827,963 775,966 678,874 653,870 661,850 667,820 680,795 708,789 717,766 723,702 752,689 750,667 755,647 737,630 732,556 668,467 643,472 640,462 590,420 572,396 520,350 465,325 423,308 385,308 357,297 354,290 363,281 354,257 155,190'];
const SOUTH_IN=['829,224 836,245 833,268 857,302 870,307 895,326 920,320 935,299 952,299 975,318 1000,327 1015,342 1035,341 1048,338 1070,364 1093,378 1102,388 1120,394 1113,405 1124,430 1120,441 1133,455 1172,462 1173,480 1183,500 1210,513',
 '672,176 679,200 678,214 650,238 632,240 604,256 603,280 615,303 647,336 636,345 642,380 677,398 685,418 708,433 702,453 721,479 745,484 790,516 780,527 785,565 802,582 803,603 790,602 764,593 735,593'];
const sheet=(tr,out,inn)=>`<g transform="${tr}">${out.map(p=>`<polyline points="${p}"/>`).join('')}${inn.map(p=>`<polyline class="in" points="${p}"/>`).join('')}</g>`;
define('map-canvas',`:host{display:block;flex:none;width:849px;background:#fff;border:1px solid #82868f;overflow:hidden}
 svg{display:block}polyline{fill:none;stroke:#000;stroke-width:2.300;stroke-linejoin:round;stroke-linecap:round;vector-effect:non-scaling-stroke}.in{stroke-width:2.700}
 text{font:14.500px "DejaVu Sans Condensed","DejaVu Sans",sans-serif;fill:#0a0a0a}`,
 ()=>`<svg width="847" height="867" viewBox="644 146 847 867"><g shape-rendering="crispEdges">${
  CELLS.map((r,j)=>r.map((c,i)=>c?`<rect x="${GX[i]}" y="${GY[j]}" width="${GX[i+1]-GX[i]}" height="${GY[j+1]-GY[j]}" fill="${c}"/>`:'').join('')).join('')}</g>
  ${[['NORTE',978.5,348,48.500],['PACIFICO_NORTE',769.5,431,123],['CENTRAL',1044,495,63],['CARIBE',1243.5,527.5,51],['PACIFICO_CENTRAL',1029.5,604,137],['PACIFICO_SUR',1242.5,757,102]].map(([t,x,y,w])=>`<text x="${x}" y="${y}" textLength="${w}" lengthAdjust="spacingAndGlyphs">${t}</text>`).join('')}
  ${sheet('translate(640 180) scale(.33333)',WEST,WEST_IN)}${sheet('translate(1060 180) scale(.33333)',EAST,EAST_IN)}${sheet('translate(960 540) scale(.34437 .33333)',SOUTH,SOUTH_IN)}</svg>`);

/* ---------- identify results ---------- */
const BANDS='412.99628 386.3709 433.34512 454.4041 452.30563 387.51248 356.1542 530.94794 515.4659 503.63907 509.7305 419.17105 429.1996 416.50958 458.7707 434.90305 348.76715 381.76337 390.158 384.9136 388.61163 347.05038 420.97903 484.47226 375.59586 489.18274 491.96588 386.88354 406.0883 386.61206'.split(' ');
const digits=s=>{let w=0;for(const c of s)w+=c=='.'?3.700:6;return w};
define('result-row',`:host{display:flex;flex:none;align-items:center;height:15px}:host([alt]){background:#f5f5f5}
 .f{display:flex;align-items:center;width:257px;flex:none}.sp{flex:none}tree-arrow{margin-right:7px}
 .sel{display:flex;align-items:center;flex:1;height:15px;margin-right:1px;padding-left:1px;border:1px solid #7da2ce;border-radius:2px;background:linear-gradient(#dcebfc,#c1dbfc)}`,
 a=>{const arrow=a('arrow')?'<tree-arrow open="1"></tree-arrow>':'';const sp=`<span class="sp" style="width:${a('indent')}px"></span>`;
 return a('sel')?`${sp}${arrow.replace('<tree-arrow','<tree-arrow style="margin-right:4px"')}<div class="sel"><slot></slot></div>`:`<div class="f">${sp}${arrow}<slot></slot></div><slot name="v"></slot>`});
define('drop-list',`:host{display:flex;align-items:center;justify-content:space-between;height:20px;border:1px solid #707070;border-radius:3px;background:linear-gradient(#f2f2f2 0 48%,#dedede 52%,#cfcfcf);padding:0 6px 0 2px;box-shadow:inset 0 0 0 1px #f8f8f8}
 u{width:7px;height:5px;background:#111;clip-path:polygon(0 0,100% 0,50% 100%)}`,'<slot></slot><u></u>',(r,a,el)=>el.style.width=a('width')+'px');
define('identify-panel',`:host{display:flex;flex-direction:column;width:426px;flex:none;padding:1px 1px 0 0}
 .tree{height:758px;flex:none;background:#fff;border:1px solid #82868f;display:flex;flex-direction:column}
 .head{display:flex;flex:none;height:20px;align-items:stretch;border-bottom:1px solid #d5d5d5;background:linear-gradient(#fff 0 40%,#f5f6f7 42%);margin-bottom:1px}
 .cell{display:flex;align-items:center;padding:2px 0 0 3px}.cell.a{width:254px;border-right:1px solid #dedfe1}
 .line{display:flex;align-items:center;padding:0 4px;height:20px}.gap{flex:1}
 .btn{display:flex;align-items:center;justify-content:center;width:31px;height:18px;border:1px solid #707070;border-radius:3px;background:linear-gradient(#f2f2f2 0 48%,#dedede 52%,#cfcfcf)}`,
 `<dock-title><fit-text w="76">Identify Results</fit-text></dock-title>
 <dock-tools icons="expand collapse expnew:on form desel copy print"></dock-tools>
 <div class="tree"><div class="head"><div class="cell a"><fit-text w="38">Feature</fit-text></div><div class="cell"><fit-text w="25">Value</fit-text></div></div>
 <result-row arrow="1" indent="7"><fit-text w="6">0</fit-text><fit-text slot="v" w="160">Mean_2071_2100_PTR_BC_rcp...</fit-text></result-row>
 <result-row alt arrow="1" sel="1" indent="27"><fit-text w="187">Mean_2071_2100_PTR_BC_rcp85_SEP</fit-text></result-row>
 ${BANDS.map((v,i)=>`<result-row ${i%2?'alt':''} indent="62"><fit-text w="40">Band ${String(i+1).padStart(2,'0')}</fit-text><fit-text slot="v" w="${digits(v)}">${v}</fit-text></result-row>`).join('')}
 <result-row arrow="1" indent="47"><fit-text w="45">(Derived)</fit-text></result-row>
 <result-row alt indent="82.500"><fit-text w="102">(clicked coordinate X)</fit-text><fit-text slot="v" w="36">389572</fit-text></result-row>
 <result-row indent="82.500"><fit-text w="102">(clicked coordinate Y)</fit-text><fit-text slot="v" w="42">1058986</fit-text></result-row></div>
 <div class="line" style="margin-top:5px"><fit-text w="26" style="margin-right:7px">Mode</fit-text><drop-list width="135"><fit-text w="64">Current layer</fit-text></drop-list><span class="gap"></span><check-box></check-box><fit-text w="75" style="margin:0 6px 0 4px">Auto open form</fit-text></div>
 <div class="line" style="margin-top:9px"><fit-text w="22" style="margin-right:7px">View</fit-text><drop-list width="68"><fit-text w="22">Tree</fit-text></drop-list><span class="gap"></span><div class="btn" style="margin-right:2px"><fit-text w="22">Help</fit-text></div></div>`);

/* ---------- window chrome ---------- */
define('title-bar',`:host{display:flex;align-items:flex-start;height:22px;flex:none;background:linear-gradient(90deg,#e4f1fe 0,#e2f0fe 280px,#b8dafe 345px,#b8dafe 1480px,#a9cff8 1560px,#b3d7fb);border-bottom:1px solid #56616e}
 q-icon{margin:3px 2px 0 2px}fit-text{font:12.500px/18px "Open Sans","Noto Sans",sans-serif}em{flex:1}
 .w{display:flex;height:18px;margin-right:3px;border:1px solid #4b5a68;border-top:0;border-radius:0 0 4px 4px;overflow:hidden}
 .w div{width:28px;display:flex;align-items:center;justify-content:center;border-right:1px solid #4b5a68;background:linear-gradient(#d9e7f5 0 45%,#a9bfd6 50%,#c5dbee)}
 .w div:nth-child(2){width:27px}.w div:last-child{width:47px;border:0;background:linear-gradient(#e5a394 0 45%,#b9382a 50%,#d7674f)}svg{display:block}`,
 `<q-icon name="app" size="17"></q-icon><fit-text w="305">QGIS 2.16.1-Nødebo - QGIS_BC_Project_MMENDEZ_2020</fit-text><em></em>
 <div class="w"><div><svg width="14" height="8"><rect x="1.500" y="3.500" width="11" height="4" fill="#fff" stroke="#444a60"/></svg></div>
 <div><svg width="13" height="12"><rect x="3.500" y=".5" width="8" height="8" fill="#eee" stroke="#444a60"/><rect x="1.500" y="2.500" width="8" height="8" fill="#fff" stroke="#444a60"/><rect x="4.500" y="5.500" width="2" height="2" fill="#b9c6d8" stroke="#444a60"/></svg></div>
 <div><svg width="14" height="12"><path d="M3 2l8 8M11 2L3 10" stroke="#53434a" stroke-width="4.600"/><path d="M3 2l8 8M11 2L3 10" stroke="#fff" stroke-width="2.600"/></svg></div></div>`);
define('menu-bar',`:host{display:flex;align-items:center;gap:15.800px;height:19px;flex:none;padding:0 0 0 7px;border-bottom:1px solid #b6b9c9;background:linear-gradient(#fdfdfe 0,#e9ecf6 38%,#d6dbee 42%,#e0e5f4)}`,
 [['Project',34.500],['Edit',18.500],['View',21.500],['Layer',27],['Settings',39.500],['Plugins',33.500],['Vector',30],['Raster',32],['Database',46],['Web',22],['Processing',52],['Help',21.500]].map(([t,w])=>`<fit-text w="${w}">${t}</fit-text>`).join(''));
define('tool-row',`:host{display:flex;height:34px;flex:none;border-top:1px solid #fff;border-bottom:1px solid #b4b4b4}`,'<slot></slot>');
define('side-bar',`:host{display:flex;flex-direction:column;width:47px;flex:none;border-right:1px solid #a4a4a4}
 s{display:block;height:3px;width:38px;margin-left:4px;flex:none;background:repeating-linear-gradient(90deg,#bdbdbd 0 2px,#f8f8f8 2px 4px)}
 div{display:flex;align-items:center;height:30px;flex:none;padding-left:5px}u{display:block;width:7px;height:4px;margin-left:5px;background:#222;clip-path:polygon(0 0,100% 0,50% 100%)}
 hr{margin:0;border:0;border-top:1px solid #b4b4b4;border-bottom:1px solid #fff}`,
 ()=>{const g=s=>s.split(' ').map(t=>{const [n,f]=t.split(':');return `<div${f=='r'?' style="padding-left:12px"':''}><q-icon name="${n}"></q-icon>${f=='d'?'<u></u>':''}</div>`}).join('');
 return `<s style="margin-top:4px;margin-bottom:3px"></s>${g('vadd raster feather elephant:d earth:d wms wfs:d comma vbox vnew:d gpsnew:r db:r')}<hr style="margin-top:1px"><s style="margin-top:4px;margin-bottom:4px"></s>${g('cross:r compass:r gps:r topo:r polycheck:r')}`});
define('status-bar',`:host{display:flex;align-items:center;height:28px;flex:none;padding-left:893px}
 .f{display:flex;align-items:center;flex:none;height:20px;background:#fff;border:1px solid #e1e2e5;border-top-color:#a8abb1}
 .spin{display:flex;flex-direction:column;width:14px;height:18px;margin-left:auto}.spin i{flex:1;border:1px solid #b9bdc6;background:#edf0f6;display:flex;align-items:center;justify-content:center}
 .spin i::after{content:"";width:5px;height:3px;background:#4a62a8;clip-path:polygon(50% 0,100% 100%,0 100%)}.spin i:last-child::after{transform:scaleY(-1)}
 u{width:7px;height:5px;margin-left:auto;margin-right:4px;background:#111;clip-path:polygon(0 0,100% 0,50% 100%)}`,
 `<fit-text w="53">Coordinate</fit-text><div class="f" style="margin-left:5px;width:266px;justify-content:center"><fit-text w="82">509452,1045563</fit-text></div>
 <q-icon name="mouse" size="16" style="margin:0 13px 0 3px"></q-icon><fit-text w="25">Scale</fit-text>
 <div class="f" style="margin-left:4px;width:86px;padding-left:3px"><fit-text w="60">1:1,749,387</fit-text><u></u></div>
 <q-icon name="lock" size="15" style="margin:0 12px 0 4px"></q-icon><fit-text w="44">Magnifier</fit-text>
 <div class="f" style="margin-left:4px;width:96px;padding-left:3px"><fit-text w="29">100%</fit-text><span class="spin"><i></i><i></i></span></div>
 <fit-text w="41" style="margin-left:9px">Rotation</fit-text><div class="f" style="margin-left:10px;width:93px;padding-left:2px"><fit-text w="16">0.0</fit-text><span class="spin"><i></i><i></i></span></div>
 <check-box state="on" style="margin:0 4px 0 7px"></check-box><fit-text w="35">Render</fit-text>
 <q-icon name="crs" size="16" style="margin:0 3px 0 18px"></q-icon><fit-text w="84">EPSG:5367 (OTF)</fit-text><q-icon name="bubble" size="16" style="margin-left:20px"></q-icon>`);

define('qgis-window',`:host{display:flex;flex-direction:column;width:1924px;height:1044px;border:2px solid #5f5f5f;background:#f0f0f0}
 main{display:flex;flex:1;min-height:0}map-canvas{margin:0 4px}`,
 `<title-bar></title-bar><menu-bar></menu-bar>
 <tool-row><tool-bar style="width:198px">${btns('newdoc open save saveas comp compmgr')}</tool-bar>
 <tool-bar style="width:511px">${btns('touch hand pan zin zout z11 zfull zsel zlay zlast znext bmnew bm refresh')}</tool-bar>
 <tool-bar style="width:452px">${btns('info:on gear:g select:g expr:g desel table abacus sigma ruler:k tip text:k')}</tool-bar>
 <tool-bar style="border-right:0">${btns('help')}</tool-bar></tool-row>
 <tool-row><tool-bar style="width:365px">${btns('pencils pencil gsave pts curve:g move node trash cut copy paste')}</tool-bar>
 <tool-bar style="width:260px">${btns('abc pie abhl abpin abeye abmove abrot abedit')}</tool-bar>
 <tool-bar style="width:105px">${btns('gl1 gl2 csw')}</tool-bar><tool-bar style="border-right:0">${btns('python netcdf')}</tool-bar></tool-row>
 <tool-row><tool-bar style="width:43px"></tool-bar><tool-bar style="border-right:0">${btns('az za')}</tool-bar></tool-row>
 <main><side-bar></side-bar><layers-panel></layers-panel><map-canvas></map-canvas><identify-panel></identify-panel></main>
 <status-bar></status-bar>`);
</script>
</body>
</html>
